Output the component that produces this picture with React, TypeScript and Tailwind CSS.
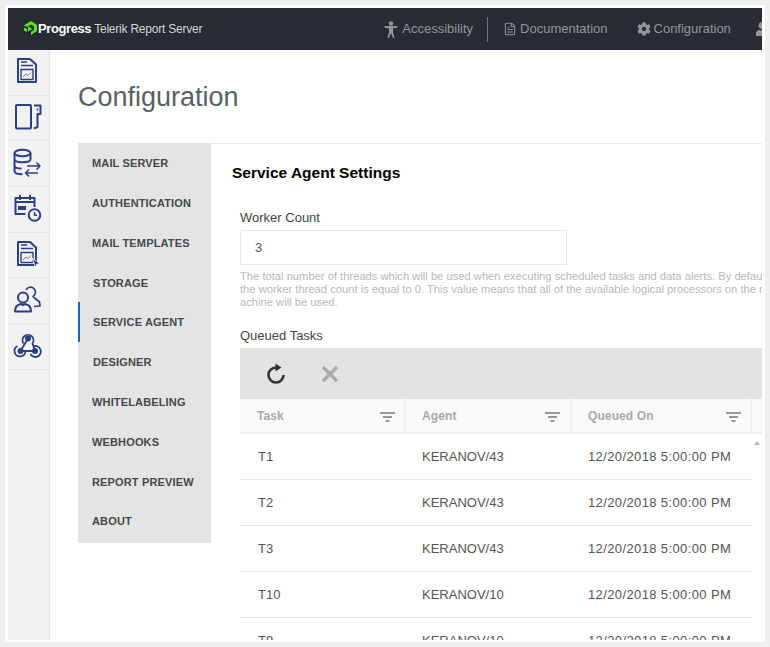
import { FileText } from 'lucide-react'
import { FaCog, FaUser } from 'react-icons/fa'

const NAVY = '#2c3f83'

const NAV = [
  'MAIL SERVER',
  'AUTHENTICATION',
  'MAIL TEMPLATES',
  'STORAGE',
  'SERVICE AGENT',
  'DESIGNER',
  'WHITELABELING',
  'WEBHOOKS',
  'REPORT PREVIEW',
  'ABOUT',
]

const ROWS = [
  ['T1', 'KERANOV/43'],
  ['T2', 'KERANOV/43'],
  ['T3', 'KERANOV/43'],
  ['T10', 'KERANOV/10'],
  ['T9', 'KERANOV/10'],
]

function Cell({ children }: { children: React.ReactNode }) {
  return <div className="h-[45.700px] border-b border-[#e8e8e8]">{children}</div>
}

function SideIcon({ children }: { children: React.ReactNode }) {
  return (
    <svg width="41" height="45" viewBox="0 0 41 45" fill="none" stroke={NAVY} strokeWidth="2" strokeLinejoin="round">
      {children}
    </svg>
  )
}

function ReportDoc() {
  return (
    <>
      <path d="M10 9h12l6 5.500V32H10z" />
      <path d="M13 12h6M13 15.500h12" strokeWidth="1.500" />
      <rect x="13" y="19.500" width="12" height="10" strokeWidth="1.400" />
      <path d="M15 27l3-3 2 1.500 3-3" stroke="#777" strokeWidth="1" />
    </>
  )
}

function SideIcons() {
  return (
    <div className="w-[42px] shrink-0 bg-[#f2f2f2] border-r border-[#e6e6e6] h-full">
      <Cell>
        <SideIcon>
          <ReportDoc />
        </SideIcon>
      </Cell>
      <Cell>
        <SideIcon>
          <rect x="8" y="9" width="15" height="23.500" rx="1" />
          <path d="M26 9.500h6.500v8.500h-3v13l-3.500 1.500" />
          <path d="M29.500 12.500v2" strokeWidth="1.500" />
        </SideIcon>
      </Cell>
      <Cell>
        <SideIcon>
          <ellipse cx="14.500" cy="12" rx="8" ry="3.200" />
          <path d="M6.500 12v18c0 2 3.500 3.200 8 3.200M22.500 12v6M6.500 18c0 2 3.500 3.200 8 3.200s8-1 8-3.200M6.500 24.500c0 2 3.500 3 7 3" />
          <path d="M19 25h13M28.500 21.500L32 25l-3.500 3.500M30 32H18M21 28.500L17.500 32l3.500 3.500" strokeWidth="1.500" />
        </SideIcon>
      </Cell>
      <Cell>
        <SideIcon>
          <path d="M17.500 27H7.500V11h19v9" />
          <path d="M12 8v5M22 8v5M8 15h18" />
          <rect x="10" y="19" width="8" height="4" fill={NAVY} stroke="none" />
          <circle cx="26.500" cy="28" r="5.800" />
          <path d="M26.500 25v3.300h2.500" strokeWidth="1.500" />
        </SideIcon>
      </Cell>
      <Cell>
        <SideIcon>
          <ReportDoc />
          <path d="M24 25l8 5.500-3.500 1-.5 3.500z" fill={NAVY} stroke="#f2f2f2" strokeWidth="1" />
        </SideIcon>
      </Cell>
      <Cell>
        <SideIcon>
          <circle cx="15" cy="19.500" r="5" />
          <path d="M7 33.500c0-5 2.500-7 6-7.500l2 1 2-1c3.500 .5 6 2.500 6 7.500z" />
          <path d="M18 12a5 5 0 1 1 7 6.500l1.500 1.500 5 4 .5 4-6 .5" strokeWidth="1.700" />
        </SideIcon>
      </Cell>
      <Cell>
        <SideIcon>
          <g strokeWidth="1.800">
            <path d="M15.500 19.500a5.500 5.500 0 1 1 9 0l2.500 7.500" />
            <path d="M20 14.500l-7.500 12.500h14.500" />
            <path d="M9.500 22a5.500 5.500 0 1 0 8 5" />
            <path d="M25 22.500a5.500 5.500 0 1 1-2.500 7.500" />
          </g>
          <circle cx="20" cy="14.500" r="2" fill={NAVY} />
          <circle cx="12.500" cy="27" r="2" fill={NAVY} />
          <circle cx="27" cy="27" r="2" fill={NAVY} />
        </SideIcon>
      </Cell>
    </div>
  )
}

function TopBar() {
  return (
    <div className="h-[42px] shrink-0 bg-[#282b33] flex items-center pl-[16px] whitespace-nowrap overflow-hidden">
      <svg width="13" height="14" viewBox="0 0 13 14" className="shrink-0 mb-[2px]">
        <path d="M0 4.500L7 0l6 4v6l-6 4v-3l3-2V5.500L7 3.500 3 6z" fill="#5fe30a" />
        <path d="M0 6.500l3 1.500v3L0 9.500z" fill="#5fe30a" />
        <path d="M4 5.500l4.500 2.500L4 10.500z" fill="#5fe30a" />
      </svg>
      <span className="ml-[1px] text-[13px] font-bold text-white tracking-[-0.4px]">Progress</span>
      <span className="ml-[3px] text-[12px] text-[#d4d5d7] tracking-[-0.22px]">Telerik Report Server</span>
      <div className="ml-[182px] flex items-center text-[13px] text-[#94969a]">
        <svg width="14" height="17" viewBox="0 0 14 17" fill="#94969a">
          <circle cx="7" cy="2.500" r="2.200" />
          <path d="M0.500 5h13v1.500L9 7.500V11l1.500 6H9L7 12l-2 5H3.500L5 11V7.500L0.500 6.500z" />
        </svg>
        <span className="ml-[4px]">Accessibility</span>
        <div className="ml-[14px] w-px h-[25px] bg-[#70737a]" />
        <FileText size={14} className="ml-[15px]" strokeWidth={1.800} />
        <span className="ml-[3px]">Documentation</span>
        <FaCog size={14} className="ml-[29px]" />
        <span className="ml-[3px]">Configuration</span>
        <FaUser size={14} className="ml-[24px] shrink-0" />
      </div>
    </div>
  )
}

function SettingsNav() {
  return (
    <div className="w-[133px] shrink-0 h-[400px] bg-[#e4e4e4]">
      {NAV.map(label => (
        <div
          key={label}
          className={`h-[39.800px] pt-[1px] flex items-center text-[11px] font-bold text-[#46484c] tracking-[0.15px] ${
            label === 'SERVICE AGENT'
              ? 'border-l-2 border-[#1a5fc4] pl-[13px]'
              : label === 'STORAGE' || label === 'DESIGNER'
                ? 'pl-[15px]'
                : 'pl-[14px]'
          }`}
        >
          {label}
        </div>
      ))}
    </div>
  )
}

function FilterIcon() {
  return (
    <svg width="15" height="10" viewBox="0 0 15 10" stroke="#777" strokeWidth="1.500" className="mt-[2px]">
      <path d="M0 1h15M3 5h9M5.500 9h4" />
    </svg>
  )
}

function HeadCell({ label, className }: { label: string; className: string }) {
  return (
    <div className={`flex items-center justify-between border-r-2 border-[#efefef] ${className}`}>
      <span>{label}</span>
      <FilterIcon />
    </div>
  )
}

function TaskGrid() {
  return (
    <div className="w-[522px]">
      <div className="h-[51px] bg-[#e3e3e3] flex items-center">
        <svg width="22" height="22" viewBox="0 0 22 22" fill="none" className="ml-[25px]">
          <path d="M18.500 12a7.500 7.500 0 1 1-7.500-7.500" stroke="#333" strokeWidth="2.600" />
          <path d="M10.500 0.500l6 4-6 4z" fill="#333" />
        </svg>
        <svg width="18" height="18" viewBox="0 0 18 18" stroke="#aaa" strokeWidth="3.200" className="ml-[34px]">
          <path d="M2 2l14 14M16 2L2 16" />
        </svg>
      </div>
      <div className="h-[35px] bg-[#fafafa] border-b-2 border-[#efefef] flex text-[12px] font-bold text-[#a9a9a9] tracking-[0.1px]">
        <HeadCell label="Task" className="w-[166px] pl-[17px] pr-[9px]" />
        <HeadCell label="Agent" className="w-[166px] pl-[16px] pr-[10px]" />
        <HeadCell label="Queued On" className="w-[180px] pl-[16px] pr-[9px]" />
      </div>
      <div className="flex">
        <div className="w-[511px] text-[13px] text-[#555]">
          {ROWS.map(([task, agent]) => (
            <div key={task} className="h-[46px] pt-[1px] flex items-center border-b border-[#e6e6e6]">
              <div className="w-[165px] pl-[18px]">{task}</div>
              <div className="w-[166px] pl-[17px]">{agent}</div>
              <div className="pl-[17px] whitespace-nowrap tracking-[0.38px]">12/20/2018 5:00:00 PM</div>
            </div>
          ))}
        </div>
        <div className="flex-1 flex justify-center pt-[7px]">
          <div className="w-0 h-0 border-x-[3px] border-x-transparent border-b-[4px] border-b-[#b5b5b5]" />
        </div>
      </div>
    </div>
  )
}

export default function App() {
  return (
    <div
      className="w-[770px] h-[647px] bg-[#efefef] pl-[5px] pt-[5px] overflow-hidden"
      style={{ fontFamily: '"Liberation Sans", Arial, sans-serif' }}
    >
      <div className="w-[760px] h-[637px] bg-white pl-[3px] pr-[3px] pt-[3px] pb-[2px]">
        <div className="w-[754px] h-[632px] flex flex-col overflow-hidden">
          <TopBar />
          <div className="flex-1 flex min-h-0">
            <SideIcons />
            <div className="flex-1 min-w-0 pl-[28px] overflow-hidden">
              <h1 className="pt-[31px] h-[93px] text-[27px] leading-[33px] text-[#5a5f66]">Configuration</h1>
              <div className="flex">
                <SettingsNav />
                <div className="flex-1 min-w-0 border-t border-[#ececec] overflow-hidden">
                  <h2 className="ml-[21px] mt-[19px] text-[15.500px] leading-[20px] font-bold text-black">Service Agent Settings</h2>
                  <div className="ml-[29px] mt-[27px]">
                    <div className="text-[13px] leading-[16px] text-[#444]">Worker Count</div>
                    <div className="mt-[4px] w-[327px] h-[35px] border border-[#e9e9e9] pl-[14px] flex items-center text-[13px] text-[#555]">
                      3
                    </div>
                    <div className="mt-[5px] text-[11.200px] leading-[13px] text-[#b8b8b8] whitespace-nowrap">
                      <div>The total number of threads which will be used when executing scheduled tasks and data alerts. By default,</div>
                      <div>the worker thread count is equal to 0. This value means that all of the available logical processors on the m</div>
                      <div>achine will be used.</div>
                    </div>
                    <div className="mt-[19px] mb-[4px] text-[13px] leading-[16px] text-[#444]">Queued Tasks</div>
                    <TaskGrid />
                  </div>
                </div>
              </div>
            </div>
          </div>
        </div>
      </div>
    </div>
  )
}
